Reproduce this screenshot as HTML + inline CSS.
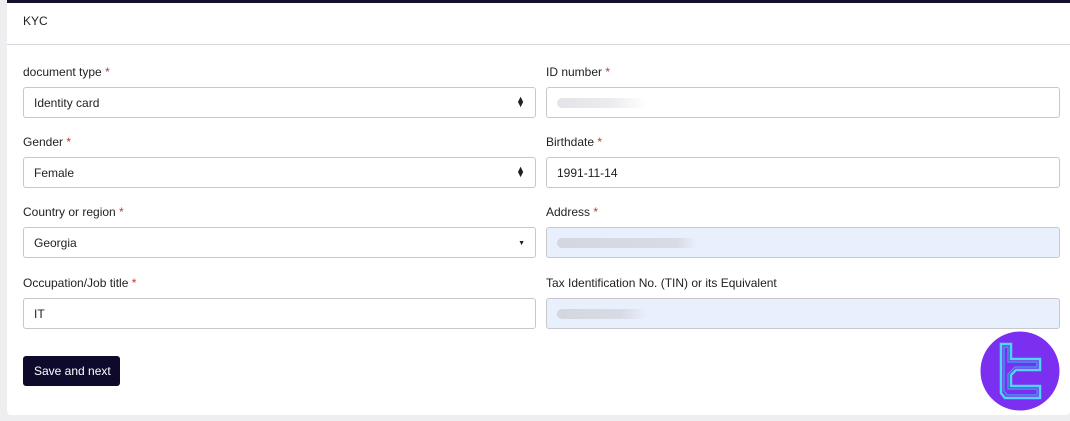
<!DOCTYPE html>
<html><head><meta charset="utf-8"><style>
*{box-sizing:border-box;margin:0;padding:0}
body{width:1070px;height:421px;background:#eeeef0;font-family:"Liberation Sans",sans-serif;position:relative;overflow:hidden;color:#222}
.card{position:absolute;left:7px;top:0;width:1063px;height:415px;background:#fff;border-top:3px solid #14102e;border-radius:0 0 4px 4px}
.hdr{position:absolute;left:0;top:0;width:100%;height:42px;border-bottom:1px solid #d8d8dc;font-size:12px;padding:11px 0 0 16px}
.lbl{position:absolute;font-size:12px;color:#222}
.lbl i{color:#c0392b;font-style:normal}
.in{position:absolute;height:31px;border:1px solid #c8c8cc;border-radius:3px;font-size:12px;padding:8px 0 0 10px;background:#fff}
.L{left:16px;width:513px}.R{left:539px;width:514px}
.blue{background:#e8effd}
.blur{position:absolute;top:10px;left:10px;height:10px;border-radius:5px}
.arr{position:absolute;right:10px;top:9px;font-size:9px;line-height:5px;color:#222}
.btn{position:absolute;left:16px;top:353px;width:97px;height:30px;background:#0e0a2c;border-radius:3px;color:#fff;font-size:12px;padding:8px 0 0 11px}
</style></head><body>
<div class="card">
<div class="hdr">KYC</div>
<div class="lbl" style="left:16px;top:62px">document type <i>*</i></div>
<div class="lbl" style="left:539px;top:62px">ID number <i>*</i></div>
<div class="in L" style="top:84px">Identity card<div class="arr">▲<br>▼</div></div>
<div class="in R" style="top:84px"><div class="blur" style="width:90px;background:linear-gradient(90deg,#e4e4e8,#ececef 60%,#fff)"></div></div>
<div class="lbl" style="left:16px;top:132px">Gender <i>*</i></div>
<div class="lbl" style="left:539px;top:132px">Birthdate <i>*</i></div>
<div class="in L" style="top:154px">Female<div class="arr">▲<br>▼</div></div>
<div class="in R" style="top:154px">1991-11-14</div>
<div class="lbl" style="left:16px;top:202px">Country or region <i>*</i></div>
<div class="lbl" style="left:539px;top:202px">Address <i>*</i></div>
<div class="in L" style="top:224px">Georgia<div class="arr" style="top:13px;font-size:7px">▼</div></div>
<div class="in R blue" style="top:224px"><div class="blur" style="width:140px;background:linear-gradient(90deg,#d4d6e0,#d8dae4 85%,#e8effd)"></div></div>
<div class="lbl" style="left:16px;top:273px">Occupation/Job title <i>*</i></div>
<div class="lbl" style="left:539px;top:273px">Tax Identification No. (TIN) or its Equivalent</div>
<div class="in L" style="top:295px">IT</div>
<div class="in R blue" style="top:295px"><div class="blur" style="width:90px;background:linear-gradient(90deg,#d4d6e0,#d8dae4 70%,#e8effd)"></div></div>
<div class="btn">Save and next</div>
</div>
<svg style="position:absolute;left:980px;top:331px" width="80" height="80" viewBox="0 0 80 80">
<circle cx="40" cy="40" r="39.5" fill="#7b2ff0"/>
<path d="M21 13H31V28H60V39H36L31 44V55H60V67H25L21 62Z" fill="none" stroke="#4fd6f5" stroke-width="2.5" stroke-linejoin="miter"/>
<path d="M25 16H28V31H57V36H35L28 43V58H57V64H27L24 60V16Z" fill="none" stroke="#3aa8e8" stroke-width="1.2"/>
</svg>
</body></html>
